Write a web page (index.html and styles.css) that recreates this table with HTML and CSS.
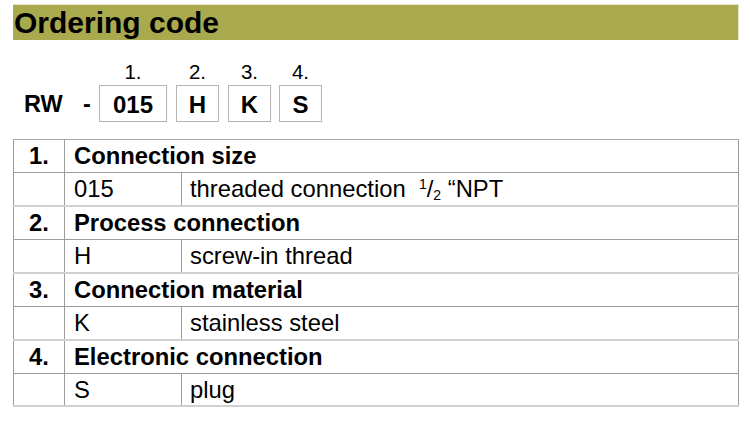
FILE: index.html
```html
<!DOCTYPE html>
<html>
<head>
<meta charset="utf-8">
<link rel="stylesheet" href="styles.css">
</head>
<body>
<div class="page">
  <div class="title-bar">Ordering code</div>

  <div class="code-row">
    <div class="prefix">RW</div>
    <div class="dash">-</div>
    <div class="boxes">
      <div class="slot slot-wide"><div class="slot-label">1.</div><div class="slot-box">015</div></div>
      <div class="slot"><div class="slot-label">2.</div><div class="slot-box">H</div></div>
      <div class="slot"><div class="slot-label">3.</div><div class="slot-box">K</div></div>
      <div class="slot slot-last"><div class="slot-label">4.</div><div class="slot-box">S</div></div>
    </div>
  </div>

  <table class="spec">
    <colgroup>
      <col class="c-num">
      <col class="c-code">
      <col class="c-desc">
    </colgroup>
    <tr class="group">
      <td class="num">1.</td>
      <td class="heading" colspan="2">Connection size</td>
    </tr>
    <tr class="item">
      <td></td>
      <td class="code">015</td>
      <td class="desc">threaded connection&nbsp; <span class="frac"><span class="sup">1</span>/<span class="sub">2</span></span> “NPT</td>
    </tr>
    <tr class="group">
      <td class="num">2.</td>
      <td class="heading" colspan="2">Process connection</td>
    </tr>
    <tr class="item">
      <td></td>
      <td class="code">H</td>
      <td class="desc">screw-in thread</td>
    </tr>
    <tr class="group">
      <td class="num">3.</td>
      <td class="heading" colspan="2">Connection material</td>
    </tr>
    <tr class="item">
      <td></td>
      <td class="code">K</td>
      <td class="desc">stainless steel</td>
    </tr>
    <tr class="group">
      <td class="num">4.</td>
      <td class="heading" colspan="2">Electronic connection</td>
    </tr>
    <tr class="item last">
      <td></td>
      <td class="code">S</td>
      <td class="desc">plug</td>
    </tr>
  </table>
</div>
</body>
</html>
```

FILE: styles.css
```css
html, body {
  margin: 0;
  padding: 0;
  background: #ffffff;
}

body {
  font-family: "Liberation Sans", Arial, sans-serif;
  color: #000;
}

.page {
  padding: 4px 0 0 13px;
  width: 726px;
}

.title-bar {
  box-sizing: border-box;
  height: 36px;
  width: 726px;
  background: #a9a94e;
  border-top: 1px solid #e4e4c6;
  border-right: 1px solid #e4e4c6;
  font-weight: bold;
  font-size: 30px;
  line-height: 35px;
  padding-left: 1px;
}

.code-row {
  display: flex;
  align-items: flex-end;
  margin-top: 21px;
  padding-left: 11px;
}

.prefix,
.dash {
  height: 37px;
  line-height: 39px;
  font-weight: bold;
  font-size: 23.5px;
}

.prefix {
  width: 38px;
}

.dash {
  margin-left: 21px;
  width: 8px;
}

.boxes {
  display: flex;
  gap: 9px;
  margin-left: 8px;
}

.slot {
  display: flex;
  flex-direction: column;
  align-items: stretch;
  width: 43px;
}

.slot-wide {
  width: 68px;
}

.slot-last {
  margin-left: -1px;
}

.slot-label {
  text-align: center;
  font-size: 20.5px;
  line-height: 22px;
  margin-bottom: 2px;
}

.slot-box {
  box-sizing: border-box;
  height: 37px;
  border: 1px solid #b4b4b4;
  text-align: center;
  font-weight: bold;
  font-size: 24px;
  line-height: 37px;
}

.spec {
  margin-top: 17px;
  border-collapse: collapse;
  width: 726px;
  table-layout: fixed;
  font-size: 23.8px;
}

.c-num { width: 51px; }
.c-code { width: 117px; }

.spec td {
  border-left: 1px solid #9c9c9c;
  border-right: 1px solid #9c9c9c;
  padding: 0;
  vertical-align: middle;
  white-space: nowrap;
}

.spec tr.group td {
  height: 32px;
  border-top: 1px solid #9c9c9c;
  border-bottom: 1px solid #9c9c9c;
}

.spec tr.item td {
  height: 32px;
  border-bottom: 2px solid #d0d0d0;
}

.spec tr.item.last td {
  height: 31px;
}

.spec tr:first-child td {
  border-top: 1px solid #a8a8a8;
}

.num {
  text-align: center;
  font-weight: bold;
  padding-left: 2px;
}

.heading {
  font-weight: bold;
  padding-left: 9px !important;
}

.code {
  padding-left: 9px !important;
}

.desc {
  padding-left: 8px !important;
}

.frac {
  display: inline-block;
  position: relative;
}

.sup {
  font-size: 14px;
  vertical-align: 8px;
}

.sub {
  font-size: 14px;
  vertical-align: -3px;
}
```
